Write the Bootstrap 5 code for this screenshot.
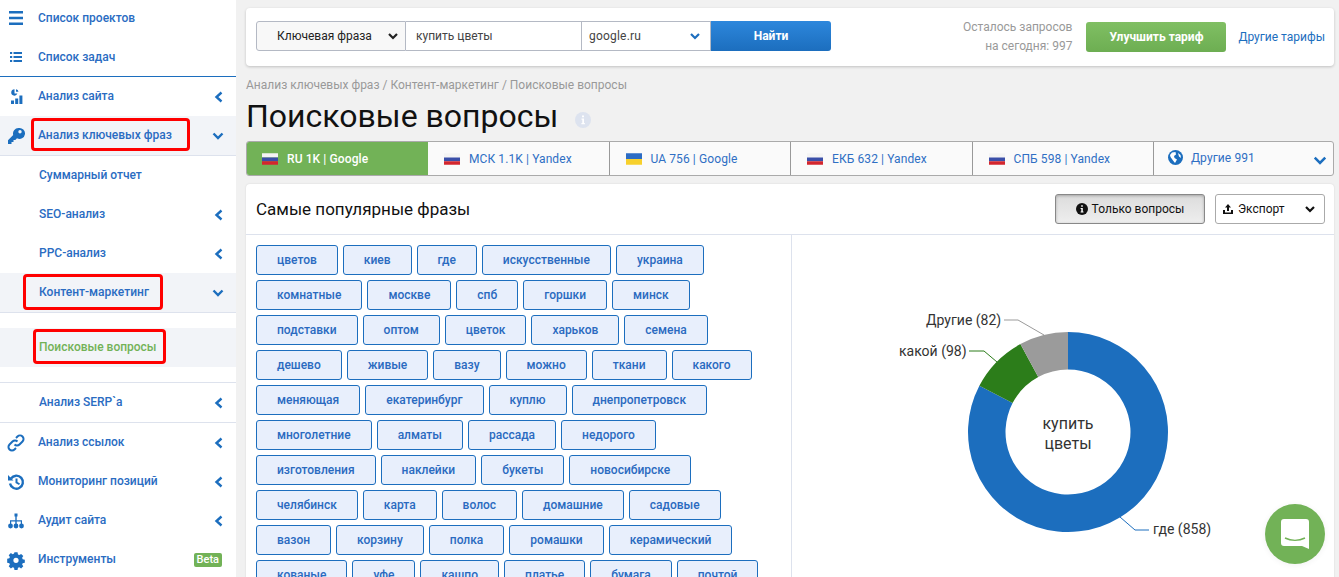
<!DOCTYPE html>
<html lang="ru">
<head>
<meta charset="UTF-8" />
<title>Поисковые вопросы</title>
<link href="https://cdn.jsdelivr.net/npm/bootstrap@5.3.0/dist/css/bootstrap.min.css" rel="stylesheet" />
<style>
    html, body { height: 577px; overflow: hidden; }
    body { background: #f1f1f1; font-family: Roboto, "Liberation Sans", sans-serif; font-size: 13px; color: #222; }
    .side { width: 236px; height: 577px; background: #fff; flex: none; overflow: hidden; }
    .side-list { margin-top: -1px; }
    .side-item { height: 39px; padding: 0 12px 2px 38px; color: #2a6cc2; font-size: 12px; font-weight: 500; display: flex; align-items: center; text-decoration: none; position: relative; white-space: nowrap; }
    .side-item.sub { padding-left: 39px; }
    .side-item.on { background: #f2f4f8; }
    .side-item.ruled { border-bottom: 1px solid #dde2ed; height: 40px; }
    .side-item .ico { position: absolute; left: 6px; top: 50%; transform: translateY(-50%); width: 20px; height: 20px; fill: #1c6ebe; }
    .side-item .arr { margin-left: auto; margin-right: -1px; margin-top: 2px; width: 12px; height: 12px; fill: none; stroke: #1c6ebe; stroke-width: 2.4; }
    .side-item .dn { margin-right: 0; }
    .rule-blue { height: 1px; background: #1c6ebe; margin-top: -1px; }
    .rule-grey { height: 1px; background: #dde2ed; }
    .side-gap { padding: 15px 0; }
    .redbox { border: 3px solid #f00; border-radius: 4px; padding: 0 4px; margin-left: -7px; width: 159px; height: 33px; display: flex; align-items: center; }
    .redbox.wide { width: 140px; margin-left: -16px; padding-left: 13px; height: 36px; }
    .redbox.third { width: 133px; margin-left: -6px; padding-left: 3px; height: 35px; color: #72b257; }
    .beta { margin-left: auto; margin-right: 2px; margin-top: 2px; background: #72b257; color: #fff; font-size: 11px; line-height: 14px; padding: 0 3px; border-radius: 2px; font-weight: 500; }
    .work { width: 1098px; padding: 8px 0 0 10px; flex: none; }
    .topbar { height: 58px; background: #fff; border-radius: 4px; box-shadow: 0 1px 3px rgba(0,0,0,.2); padding: 0 9px 0 10px; }
    .search-group { margin-bottom: 2px; }
    .fld { height: 30px; border: 1px solid #b4b9c4; border-left: 0; background: #fff; font-size: 12px; color: #444; display: flex; align-items: center; }
    .fld-kind { width: 150px; border-left: 1px solid #b4b9c4; border-radius: 3px 0 0 3px; background: #f8f8f8; color: #222; padding: 0 6px 0 20px; }
    .fld-query { width: 176px; padding-left: 10px; }
    .fld-engine { width: 129px; padding: 0 9px 0 7px; letter-spacing: .2px; }
    .chev { width: 12px; height: 12px; fill: none; stroke-width: 2.2; margin-left: auto; }
    .go { width: 120px; height: 30px; border-radius: 0 3px 3px 0; border: 0; color: #fff; font-weight: 700; font-size: 12px; background: linear-gradient(#2d87dc, #1c6ebe); }
    .quota { margin-left: auto; color: #999; font-size: 12px; line-height: 19px; text-align: right; }
    .upg { width: 140px; height: 30px; margin-left: 14px; border: 0; border-radius: 3px; color: #fff; font-weight: 700; font-size: 12px; background: linear-gradient(#80bf63, #6dae52); }
    .more-plans { margin-left: 12px; color: #1c6ebe; font-size: 12px; text-decoration: none; }
    .crumbs { color: #999; font-size: 12px; margin-top: 12px; line-height: 14px; }
    .page-ttl { font-size: 32px; font-weight: 400; color: #111; line-height: 40px; margin: 4px 0 5px; }
    .ttl-info { margin-left: 17px; margin-top: 6px; }
    .tabrow { height: 35px; background: #fafafa; border: 1px solid #aaa; border-radius: 3px; overflow: hidden; }
    .tabitem { width: 181.5px; flex: none; font-size: 12px; color: #2f6fc4; display: flex; align-items: center; padding-left: 16px; gap: 9px; border-right: 1px solid #999; letter-spacing: .1px; }
    .tabitem.on { background: #72b257; color: #fff; font-weight: 500; width: 181px; padding-left: 15px; border-right: 0; }
    .tabitem:last-child { border-right: 0; flex: 1; padding-left: 14px; gap: 8px; padding-bottom: 2px; }
    .flag { width: 16px; height: 12px; flex: none; }
    .tab-chev { width: 14px; height: 14px; margin-right: 6px; margin-top: 4px; }
    .panel { margin-top: 8px; height: 400px; background: #fff; border-radius: 4px 4px 0 0; box-shadow: 0 0 2px rgba(0,0,0,.12); }
    .panel-head { height: 51px; border-bottom: 1px solid #dde2ed; padding: 0 9px 0 10px; }
    .panel-ttl { font-size: 17px; margin: 0; color: #111; font-weight: 400; }
    .onlyq { width: 150px; height: 30px; border: 1px solid #888; border-radius: 3px; background: linear-gradient(#dcdcdc, #eee); box-shadow: inset 0 1px 3px rgba(0,0,0,.25); font-size: 12px; color: #111; display: flex; align-items: center; justify-content: center; gap: 4px; padding: 0; }
    .export { width: 110px; height: 30px; margin-left: 10px; border: 1px solid #aaa; border-radius: 3px; background: #fff; font-size: 12px; color: #111; display: flex; align-items: center; padding: 0 8px 0 6px; gap: 4px; }
    .chips-col { width: 546px; flex: none; border-right: 1px solid #dde2ed; padding: 10px 14px 0 10px; align-content: flex-start; gap: 5px; }
    .chip { height: 30px; padding: 0 20px; border: 1px solid #1c6ebe; border-radius: 3px; background: #e8effc; color: #2a6ac0; font-size: 12px; font-weight: 500; display: flex; align-items: center; text-decoration: none; }
    .chart-col { flex: 1; min-width: 0; }
    .chart-svg { display: block; }
    .chart-svg text { font-family: Roboto, "Liberation Sans", sans-serif; font-size: 14px; fill: #333; }
    .chart-svg .mid { font-size: 16px; fill: #333; }
    .chat-btn { position: fixed; left: 1265px; top: 504px; width: 60px; height: 60px; border-radius: 50%; background: #72b257; box-shadow: 0 1px 6px rgba(0,0,0,.06); display: flex; align-items: center; justify-content: center; }
</style>
</head>
<body>
<div class="d-flex">
    <aside class="side">
        <div class="side-list">
            <a class="side-item" href="#"><svg class="ico" viewBox="0 0 20 20"><path d="M3 2h14v2.400H3zM3 7.800h14v2.400H3zM3 13.600h14V16H3z"/></svg>Список проектов</a>
            <a class="side-item" href="#"><svg class="ico" viewBox="0 0 20 20"><path d="M4 4h2.200v2H4zM7.500 4H16v2H7.500zM4 8h2.200v2H4zM7.500 8H16v2H7.500zM4 12h2.200v2H4zM7.500 12H16v2H7.500z"/></svg>Список задач</a>
            <div class="rule-blue"></div>
            <a class="side-item" href="#"><svg class="ico" viewBox="0 0 20 20"><path d="M8.500 2.200a3.200 3.200 0 1 0 2.900 4.400H8.500zM10 2.200v2.600h2.500A3 3 0 0 0 10 2.200zM5 13.500h3V17H5zM9.200 11.500h3V17h-3zM13.400 8.500h3V17h-3z"/></svg>Анализ сайта<svg class="arr" viewBox="0 0 12 12"><path d="M8.500 1.500 3.500 6l5 4.500"/></svg></a>
            <a class="side-item on ruled" href="#"><svg class="ico" viewBox="0 0 20 20"><path d="M12.500 2a5.500 5.500 0 0 0-5.300 7L2 14.200V18h3.500v-2h2v-2h1.800l1.700-1.700A5.500 5.500 0 1 0 12.500 2zm1.500 5.500a1.700 1.700 0 1 1 0-3.400 1.700 1.700 0 0 1 0 3.400z"/></svg><span class="redbox">Анализ ключевых фраз</span><svg class="arr dn" viewBox="0 0 12 12"><path d="M1.500 3.500 6 8l4.500-4.500"/></svg></a>
            <a class="side-item sub" href="#">Суммарный отчет</a>
            <a class="side-item sub" href="#">SEO-анализ<svg class="arr" viewBox="0 0 12 12"><path d="M8.500 1.500 3.500 6l5 4.500"/></svg></a>
            <a class="side-item sub" href="#">PPC-анализ<svg class="arr" viewBox="0 0 12 12"><path d="M8.500 1.500 3.500 6l5 4.500"/></svg></a>
            <a class="side-item sub on ruled" href="#"><span class="redbox wide">Контент-маркетинг</span><svg class="arr dn" viewBox="0 0 12 12"><path d="M1.500 3.500 6 8l4.500-4.500"/></svg></a>
            <div class="side-gap">
                <a class="side-item sub on" href="#"><span class="redbox third">Поисковые вопросы</span></a>
            </div>
            <div class="rule-grey"></div>
            <a class="side-item sub" href="#">Анализ SERP`а<svg class="arr" viewBox="0 0 12 12"><path d="M8.500 1.500 3.500 6l5 4.500"/></svg></a>
            <div class="rule-grey"></div>
            <a class="side-item" href="#"><svg class="ico" viewBox="0 0 20 20"><path fill="none" stroke="#1c6ebe" stroke-width="2" d="M8.500 11.500a3.500 3.500 0 0 0 5 0l3-3a3.500 3.500 0 0 0-5-5l-1.500 1.500M11.500 8.500a3.500 3.500 0 0 0-5 0l-3 3a3.500 3.500 0 0 0 5 5l1.500-1.500"/></svg>Анализ ссылок<svg class="arr" viewBox="0 0 12 12"><path d="M8.500 1.500 3.500 6l5 4.500"/></svg></a>
            <a class="side-item" href="#"><svg class="ico" viewBox="0 0 20 20"><path fill="none" stroke="#1c6ebe" stroke-width="2.400" d="M5 6.500A6.500 6.500 0 1 1 4 11.500"/><path d="M2 3l5.500 5.500H2zM9.500 6.500h2v3.500l2.500 1.500-1 1.600-3.500-2.100z"/></svg>Мониторинг позиций<svg class="arr" viewBox="0 0 12 12"><path d="M8.500 1.500 3.500 6l5 4.500"/></svg></a>
            <a class="side-item" href="#"><svg class="ico" viewBox="0 0 20 20"><path d="M8.500 2.500h3v3h-.8v3.700H16V13h-1.200v-2.600h-4.100V13H9.300v-2.600H5.200V13H4V9.200h5.300V5.500h-.8z"/><circle cx="4.500" cy="15" r="2.400"/><circle cx="10" cy="15" r="2.400"/><circle cx="15.500" cy="15" r="2.400"/></svg>Аудит сайта<svg class="arr" viewBox="0 0 12 12"><path d="M8.500 1.500 3.500 6l5 4.500"/></svg></a>
            <a class="side-item" href="#"><svg class="ico" viewBox="0 0 20 20"><path d="M8.300 1.500h3.400l.5 2.400 1.500.6 2-1.300 2.400 2.400-1.300 2 .6 1.500 2.400.5v3.400l-2.400.5-.6 1.500 1.300 2-2.400 2.400-2-1.300-1.500.6-.5 2.400H8.300l-.5-2.400-1.500-.6-2 1.300-2.400-2.400 1.300-2-.6-1.500-2.400-.5V8.600l2.400-.5.6-1.500-1.300-2 2.400-2.400 2 1.300 1.500-.6zM10 7.400a2.900 2.900 0 1 0 0 5.800 2.900 2.900 0 0 0 0-5.800z" transform="translate(1 1) scale(.9)"/></svg>Инструменты<span class="beta">Beta</span></a>
        </div>
    </aside>

    <main class="work">
        <div class="topbar d-flex align-items-center">
            <div class="search-group d-flex">
                <div class="fld fld-kind">Ключевая фраза<svg class="chev" viewBox="0 0 12 12" stroke="#222"><path d="M2 4l4 4 4-4"/></svg></div>
                <div class="fld fld-query">купить цветы</div>
                <div class="fld fld-engine">google.ru<svg class="chev" viewBox="0 0 12 12" stroke="#1c6ebe"><path d="M2 4l4 4 4-4"/></svg></div>
                <button class="go">Найти</button>
            </div>
            <div class="quota">Осталось запросов<br>на сегодня: 997</div>
            <button class="upg">Улучшить тариф</button>
            <a class="more-plans" href="#">Другие тарифы</a>
        </div>

        <div class="crumbs">Анализ ключевых фраз / Контент-маркетинг / Поисковые вопросы</div>
        <div class="d-flex align-items-center">
            <h1 class="page-ttl">Поисковые вопросы</h1>
            <svg class="ttl-info" width="16" height="16" viewBox="0 0 18 18"><circle cx="9" cy="9" r="9" fill="#dde3ef"/><path fill="#fff" d="M7.900 3.800h2.200v2.200H7.900zM7.300 7.200h2.800v5.300h1v1.400H7.200v-1.400h1V8.600h-.9z"/></svg>
        </div>

        <div class="tabrow d-flex">
            <div class="tabitem on"><svg class="flag" viewBox="0 0 15 11"><path fill="#f4f4f4" d="M0 0h15v4H0z"/><path fill="#3a4fa8" d="M0 4h15v3.500H0z"/><path fill="#d3262e" d="M0 7.500h15V11H0z"/></svg>RU 1K | Google</div>
            <div class="tabitem"><svg class="flag" viewBox="0 0 15 11"><path fill="#f4f4f4" d="M0 0h15v4H0z"/><path fill="#3a4fa8" d="M0 4h15v3.500H0z"/><path fill="#d3262e" d="M0 7.500h15V11H0z"/></svg>МСК 1.1K | Yandex</div>
            <div class="tabitem"><svg class="flag" viewBox="0 0 15 11"><path fill="#2c6cc4" d="M0 0h15v5.500H0z"/><path fill="#f7d02c" d="M0 5.500h15V11H0z"/></svg>UA 756 | Google</div>
            <div class="tabitem"><svg class="flag" viewBox="0 0 15 11"><path fill="#f4f4f4" d="M0 0h15v4H0z"/><path fill="#3a4fa8" d="M0 4h15v3.500H0z"/><path fill="#d3262e" d="M0 7.500h15V11H0z"/></svg>ЕКБ 632 | Yandex</div>
            <div class="tabitem"><svg class="flag" viewBox="0 0 15 11"><path fill="#f4f4f4" d="M0 0h15v4H0z"/><path fill="#3a4fa8" d="M0 4h15v3.500H0z"/><path fill="#d3262e" d="M0 7.500h15V11H0z"/></svg>СПБ 598 | Yandex</div>
            <div class="tabitem"><svg width="15" height="15" viewBox="0 0 15 15"><circle cx="7.500" cy="7.500" r="7.500" fill="#1c6ebe"/><path fill="#fff" d="M4 2.500 7.500 2 8 4.500 6 6 6.500 8 9 9.500 7 13 5 10.500 2.500 7 2 5zM10 3l2.500 2L13 8l-2-1.500z"/></svg>Другие 991<svg class="chev tab-chev" viewBox="0 0 12 12" stroke="#1c6ebe"><path d="M1.500 4 6 8.500 10.500 4"/></svg></div>
        </div>

        <section class="panel">
            <div class="panel-head d-flex align-items-center">
                <h2 class="panel-ttl me-auto">Самые популярные фразы</h2>
                <button class="onlyq"><svg width="12" height="12" viewBox="0 0 12 12"><circle cx="6" cy="6" r="6" fill="#111"/><path fill="#fff" d="M5.200 2.200h1.600v1.600H5.200zM4.600 4.900h2.200v3.500h.7v1H4.600v-1h.7V5.900h-.7z"/></svg>Только вопросы</button>
                <button class="export"><svg width="12" height="12" viewBox="0 0 12 12"><path fill="#111" d="M6 1 9 4.500H7V8H5V4.500H3zM1 7h2v2.500h6V7h2v4H1z"/></svg>Экспорт<svg class="chev" viewBox="0 0 12 12" stroke="#111"><path d="M2 4l4 4 4-4"/></svg></button>
            </div>
            <div class="d-flex">
                <div class="chips-col d-flex flex-wrap" id="chips"></div>
                <div class="chart-col">
                    <svg class="chart-svg" width="542" height="349" viewBox="792 235 542 349">
                        <path id="s1" fill="#1c6ebe"/>
                        <path id="s2" fill="#2c7d1a"/>
                        <path id="s3" fill="#9b9b9b"/>
                        <path d="M1004 320h14l26 15" fill="none" stroke="#9b9b9b"/>
                        <path d="M969 351h15l13 11" fill="none" stroke="#2c7d1a"/>
                        <path d="M1120 517l15 13h14" fill="none" stroke="#1c6ebe"/>
                        <text x="926" y="325">Другие (82)</text>
                        <text x="899" y="356">какой (98)</text>
                        <text x="1153" y="534">где (858)</text>
                        <text class="mid" x="1068" y="429" text-anchor="middle">купить</text>
                        <text class="mid" x="1068" y="449" text-anchor="middle">цветы</text>
                    </svg>
                </div>
            </div>
        </section>
    </main>
</div>

<div class="chat-btn">
    <svg width="28" height="32" viewBox="0 0 28 32"><path fill="#fff" d="M3 1h22a3 3 0 0 1 3 3v27l-7-3H3a3 3 0 0 1-3-3V4a3 3 0 0 1 3-3z"/><path fill="none" stroke="#72b257" stroke-width="1.500" d="M4 20c6 3 14 3 20 0"/></svg>
</div>

<script>
    const words = ['цветов','киев','где','искусственные','украина','комнатные','москве','спб','горшки','минск','подставки','оптом','цветок','харьков','семена','дешево','живые','вазу','можно','ткани','какого','меняющая','екатеринбург','куплю','днепропетровск','многолетние','алматы','рассада','недорого','изготовления','наклейки','букеты','новосибирске','челябинск','карта','волос','домашние','садовые','вазон','корзину','полка','ромашки','керамический','кованые','уфе','кашпо','платье','бумага','почтой'];
    document.getElementById('chips').innerHTML = words.map(w => `<a class="chip" href="#">${w}</a>`).join('');

    // donut, same numbers as the legend
    function arc(from, to) {
        const cx = 1068, cy = 432, R = 100, r = 62.5;
        const p = (rad, a) => (cx + rad * Math.sin(a)).toFixed(2) + ' ' + (cy - rad * Math.cos(a)).toFixed(2);
        const big = to - from > Math.PI ? 1 : 0;
        return `M${p(R, from)}A${R} ${R} 0 ${big} 1 ${p(R, to)}L${p(r, to)}A${r} ${r} 0 ${big} 0 ${p(r, from)}Z`;
    }
    const vals = [858, 98, 82];
    const total = vals.reduce((a, b) => a + b, 0);
    let start = 0;
    vals.forEach((v, i) => {
        const end = start + v / total * Math.PI * 2;
        document.getElementById('s' + (i + 1)).setAttribute('d', arc(start, end));
        start = end;
    });
</script>
<script src="https://cdn.jsdelivr.net/npm/bootstrap@5.3.0/dist/js/bootstrap.bundle.min.js"></script>
</body>
</html>
